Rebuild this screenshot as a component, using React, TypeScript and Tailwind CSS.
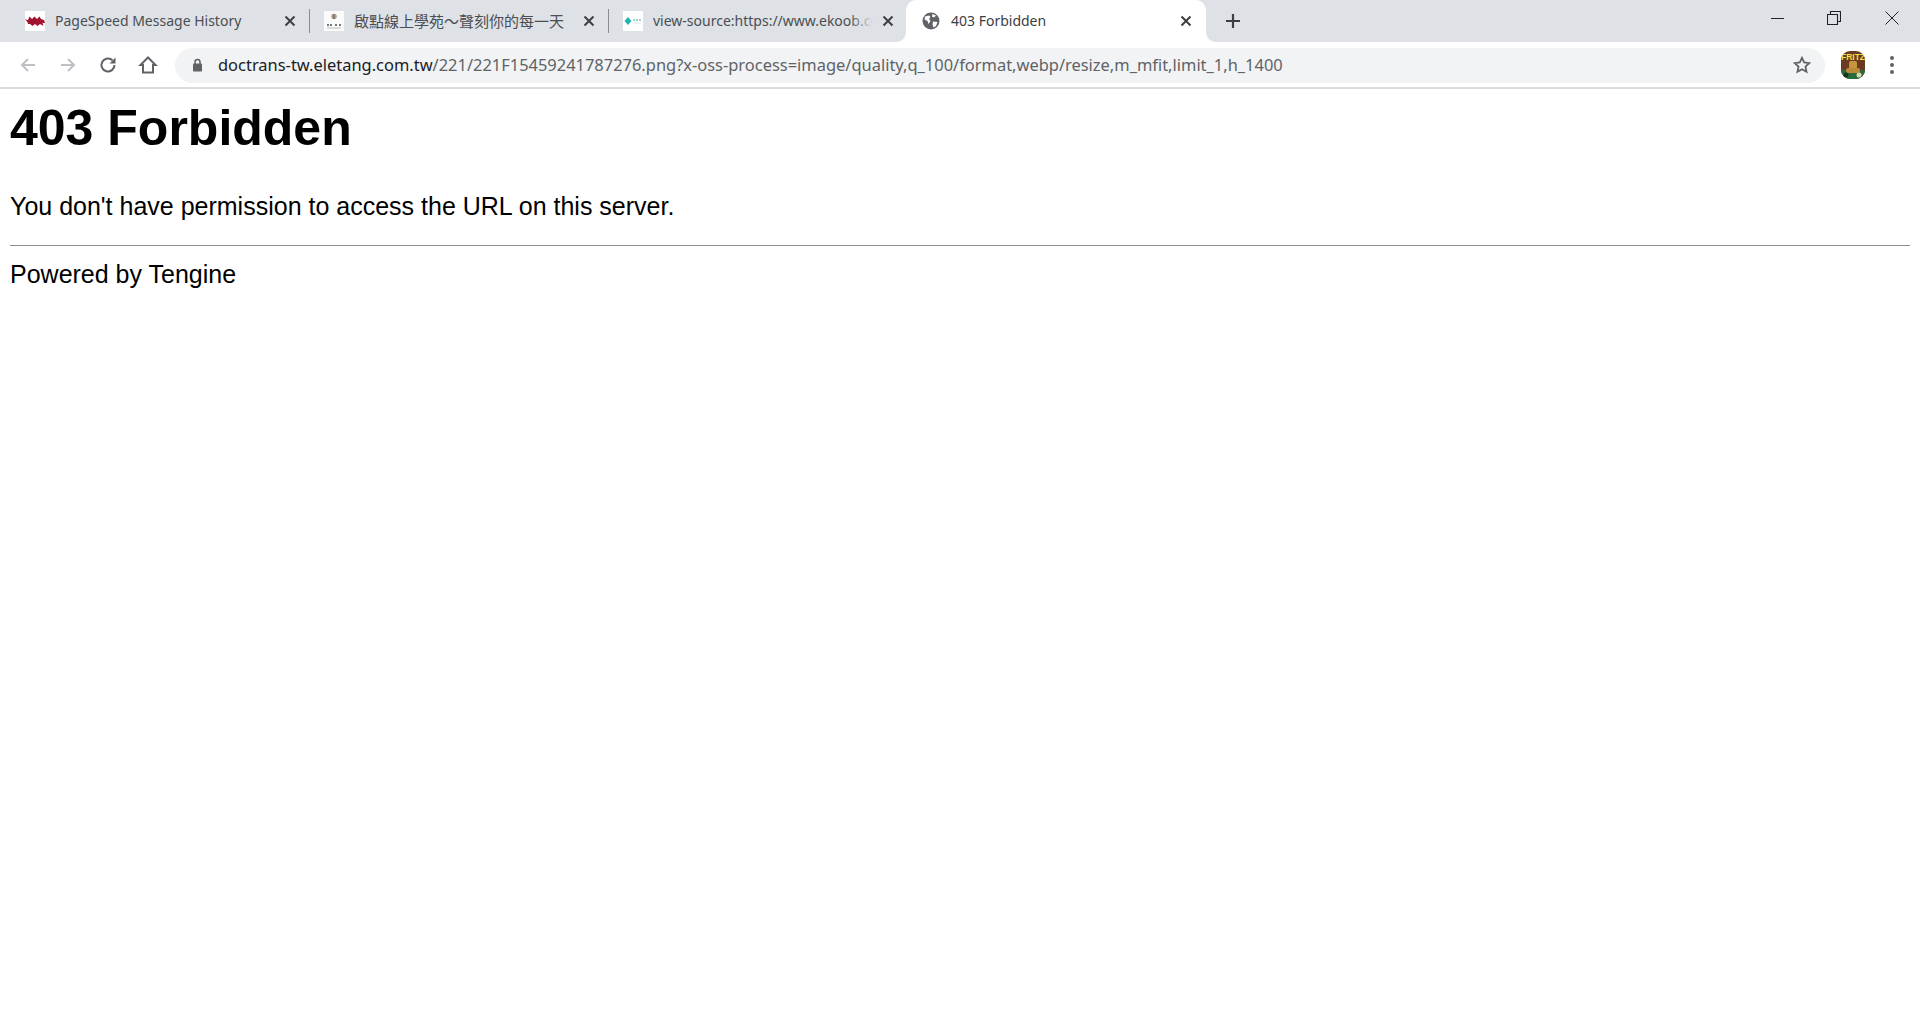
import React from "react";

const X = ({ color = "#3c4043" }: { color?: string }) => (
  <svg width="12" height="12" viewBox="0 0 12 12" className="shrink-0">
    <path d="M1.500 1.500 10.500 10.500M10.500 1.500 1.500 10.500" stroke={color} strokeWidth="2" />
  </svg>
);

const Fav1 = () => (
  <svg width="20" height="20" viewBox="0 0 20 20" className="shrink-0">
    <rect width="20" height="20" fill="#fff" />
    <path d="M0 8.500 3 9 4.500 5.500 7 8 9.500 5.500 12 8 14.500 5.500 16 8 19 9 20 12 17.500 12 18.500 15 15 13 12.500 15 10 13 7.500 15 5 13 3 13 2.500 11Z" fill="#a2132e" />
  </svg>
);
const Fav2 = () => (
  <svg width="20" height="20" viewBox="0 0 20 20" className="shrink-0">
    <rect width="20" height="20" fill="#fbfbfb" />
    <circle cx="10" cy="5.500" r="2.800" fill="#b9a58e" />
    <path d="M10 3v5" stroke="#555" strokeWidth="1" />
    <path d="M3 14h2M6 14h2M11 14h2M15 14h2" stroke="#777" strokeWidth="2" />
    <path d="M3 17h14" stroke="#bbb" strokeWidth="1" />
  </svg>
);
const Fav3 = () => (
  <svg width="20" height="20" viewBox="0 0 20 20" className="shrink-0">
    <rect width="20" height="20" fill="#fff" />
    <path d="M5 6 8.500 10 5 14 1.500 10Z" fill="#1fb5b0" />
    <path d="M10 9h2M13 9h2M16 9h2" stroke="#7cc9c4" strokeWidth="1.500" />
    <path d="M10 12h8" stroke="#d0e6e4" strokeWidth="1" />
  </svg>
);
const Globe = () => (
  <svg width="18" height="18" viewBox="0 0 18 18" className="shrink-0">
    <circle cx="9" cy="9" r="8.500" fill="#5f6368" />
    <path d="M3 4.500 7 3.500 8.500 5 7 7 8.500 9 6.500 12 5.500 9 2.500 7.500ZM10.500 2 14 3.500 12 5.500 10 4.500ZM11 9.500 15.500 10 14 14 11.500 15.500 10.500 12.500Z" fill="#fff" />
  </svg>
);

function Tab({
  icon,
  title,
  fade,
  separator,
  cjk,
}: {
  icon: React.ReactNode;
  title: string;
  fade?: boolean;
  separator?: boolean;
  cjk?: boolean;
}) {
  return (
    <div className="flex h-[42px] w-[299px] shrink-0 items-center">
      <div className="ml-[15px] flex items-center">{icon}</div>
      <div
        className={`relative ml-[10px] w-[220px] shrink-0 overflow-hidden whitespace-nowrap font-['Noto_Sans','Noto_Sans_CJK_TC',sans-serif] leading-[42px] text-[#4a4e52] ${
          cjk ? "text-[15px]" : "text-[14px]"
        }`}
      >
        {title}
        {fade && (
          <div className="absolute inset-y-0 right-0 w-[24px] bg-gradient-to-r from-[#dee1e6]/0 to-[#dee1e6]" />
        )}
      </div>
      <div className="ml-[9px] shrink-0">
        <X />
      </div>
      {separator && <div className="ml-[13px] h-[24px] w-px shrink-0 bg-[#8a8d91]" />}
    </div>
  );
}

function TabStrip() {
  return (
    <div className="flex h-[42px] items-center bg-[#dee1e6]">
      <div className="w-[10px] shrink-0" />
      <Tab icon={<Fav1 />} title="PageSpeed Message History" separator />
      <Tab icon={<Fav2 />} title="啟點線上學苑～聲刻你的每一天" separator cjk />
      <Tab icon={<Fav3 />} title="view-source:https://www.ekoob.com" fade />
      <div className="relative -ml-[1px] flex h-[42px] w-[300px] shrink-0 items-center rounded-t-[10px] bg-white pl-[16px]">
        <Globe />
        <span className="ml-[11px] w-[213px] whitespace-nowrap font-['Noto_Sans',sans-serif] text-[14px] leading-[42px] text-[#3c4043]">403 Forbidden</span>
        <div className="ml-[16px] shrink-0">
          <X />
        </div>
        <div className="absolute bottom-0 -left-[10px] h-[10px] w-[10px] bg-[radial-gradient(circle_at_0_0,#dee1e6_9.5px,#ffffff_10.5px)]" />
        <div className="absolute bottom-0 -right-[10px] h-[10px] w-[10px] bg-[radial-gradient(circle_at_100%_0,#dee1e6_9.5px,#ffffff_10.5px)]" />
      </div>
      <svg width="16" height="16" viewBox="0 0 16 16" className="ml-[19px] shrink-0">
        <path d="M8 1v14M1 8h14" stroke="#3c4043" strokeWidth="2.200" />
      </svg>
      <div className="flex-1" />
      <svg width="14" height="14" viewBox="0 0 14 14" className="shrink-0 -translate-y-[3px]">
        <path d="M0 7.500h13" stroke="#222" strokeWidth="1" />
      </svg>
      <svg width="14" height="14" viewBox="0 0 14 14" className="ml-[42px] shrink-0 -translate-y-[3px]">
        <path d="M3.500 3V.5h10v10H11M.5 3.500h10v10H.5Z" fill="none" stroke="#222" strokeWidth="1.100" />
      </svg>
      <svg width="14" height="14" viewBox="0 0 14 14" className="ml-[44px] mr-[21px] shrink-0 -translate-y-[3px]">
        <path d="M.5.5 13.500 13.500M13.500.5 .5 13.500" stroke="#222" strokeWidth="1" />
      </svg>
    </div>
  );
}

function Toolbar() {
  return (
    <div className="flex h-[47px] items-center border-b-[2px] border-[#dadce0] bg-white pt-[1px]">
      <svg width="18" height="18" viewBox="0 0 18 18" className="ml-[19px] shrink-0">
        <path d="M16 9H3M9 3 3 9l6 6" fill="none" stroke="#bdc1c6" strokeWidth="2" />
      </svg>
      <svg width="18" height="18" viewBox="0 0 18 18" className="ml-[22px] shrink-0">
        <path d="M2 9h13M9 3l6 6-6 6" fill="none" stroke="#bdc1c6" strokeWidth="2" />
      </svg>
      <svg width="20" height="20" viewBox="0 0 20 20" className="ml-[21px] shrink-0">
        <path d="M16.500 10a6.500 6.500 0 1 1-2-4.700" fill="none" stroke="#5f6368" strokeWidth="2" />
        <path d="M17.500 2.500v6h-6Z" fill="#5f6368" />
      </svg>
      <svg width="20" height="20" viewBox="0 0 20 20" className="ml-[20px] shrink-0">
        <path d="M10 2.500 2.500 10H5v7.500h10V10h2.500Z" fill="none" stroke="#5f6368" strokeWidth="2" />
      </svg>
      <div className="ml-[17px] flex h-[35px] w-[1650px] shrink-0 items-center rounded-full bg-[#f1f3f4] pl-[17px]">
        <svg width="11" height="14" viewBox="0 0 11 14" className="shrink-0">
          <path d="M3 6V4a2.500 2.500 0 0 1 5 0v2" fill="none" stroke="#5f6368" strokeWidth="1.500" />
          <rect x="1" y="5.500" width="9" height="8" rx="1" fill="#5f6368" />
        </svg>
        <div className="ml-[15px] flex-1 whitespace-nowrap font-['Noto_Sans',sans-serif] text-[16.450px] text-[#5f6368]">
          <span className="text-[#202124]">doctrans-tw.eletang.com.tw</span>
          /221/221F15459241787276.png?x-oss-process=image/quality,q_100/format,webp/resize,m_mfit,limit_1,h_1400
        </div>
        <svg width="18" height="18" viewBox="0 0 18 18" className="mr-[14px] shrink-0">
          <path d="m9 1.800 2.200 4.700 5.100.6-3.800 3.500 1 5.100L9 13.200 4.500 15.700l1-5.100L1.700 7.100l5.100-.6Z" fill="none" stroke="#5f6368" strokeWidth="1.800" />
        </svg>
      </div>
      <svg width="26" height="30" viewBox="0 0 26 30" className="ml-[15px] shrink-0">
        <defs>
          <clipPath id="avatar">
            <rect x="1" y="1" width="24" height="28" rx="9" />
          </clipPath>
        </defs>
        <g clipPath="url(#avatar)">
          <rect width="26" height="30" fill="#6b3a22" />
          <rect y="20" width="26" height="10" fill="#2a6b3a" />
          <rect x="9" y="11" width="8" height="8" rx="2" fill="#c9953a" />
          <rect x="6" y="18" width="14" height="5" rx="2" fill="#b98a3a" />
          <circle cx="6" cy="25" r="2.500" fill="#16351f" />
          <circle cx="19" cy="25" r="2.500" fill="#d9d6b8" />
          <text x="13" y="10" textAnchor="middle" fontSize="8.500" fontWeight="700" fill="#f4e23c" fontFamily="Liberation Sans, sans-serif">FRITZ</text>
        </g>
      </svg>
      <div className="ml-[24px] flex shrink-0 flex-col gap-[3px]">
        <div className="h-[4px] w-[4px] rounded-full bg-[#5f6368]" />
        <div className="h-[4px] w-[4px] rounded-full bg-[#5f6368]" />
        <div className="h-[4px] w-[4px] rounded-full bg-[#5f6368]" />
      </div>
    </div>
  );
}

export default function App() {
  return (
    <div className="h-[1030px] overflow-hidden bg-white font-['Liberation_Sans',Arial,sans-serif] text-black">
      <TabStrip />
      <Toolbar />
      <main className="px-[10px] pt-[10px]">
        <h1 className="text-[50px] font-bold leading-[58px]">403 Forbidden</h1>
        <p className="mt-[34px] text-[25px] leading-[30px]">You don't have permission to access the URL on this server.</p>
        <hr className="mt-[24px] border-t border-[#8f8f8f]" />
        <p className="mt-[13px] text-[25px] leading-[30px]">Powered by Tengine</p>
      </main>
    </div>
  );
}
